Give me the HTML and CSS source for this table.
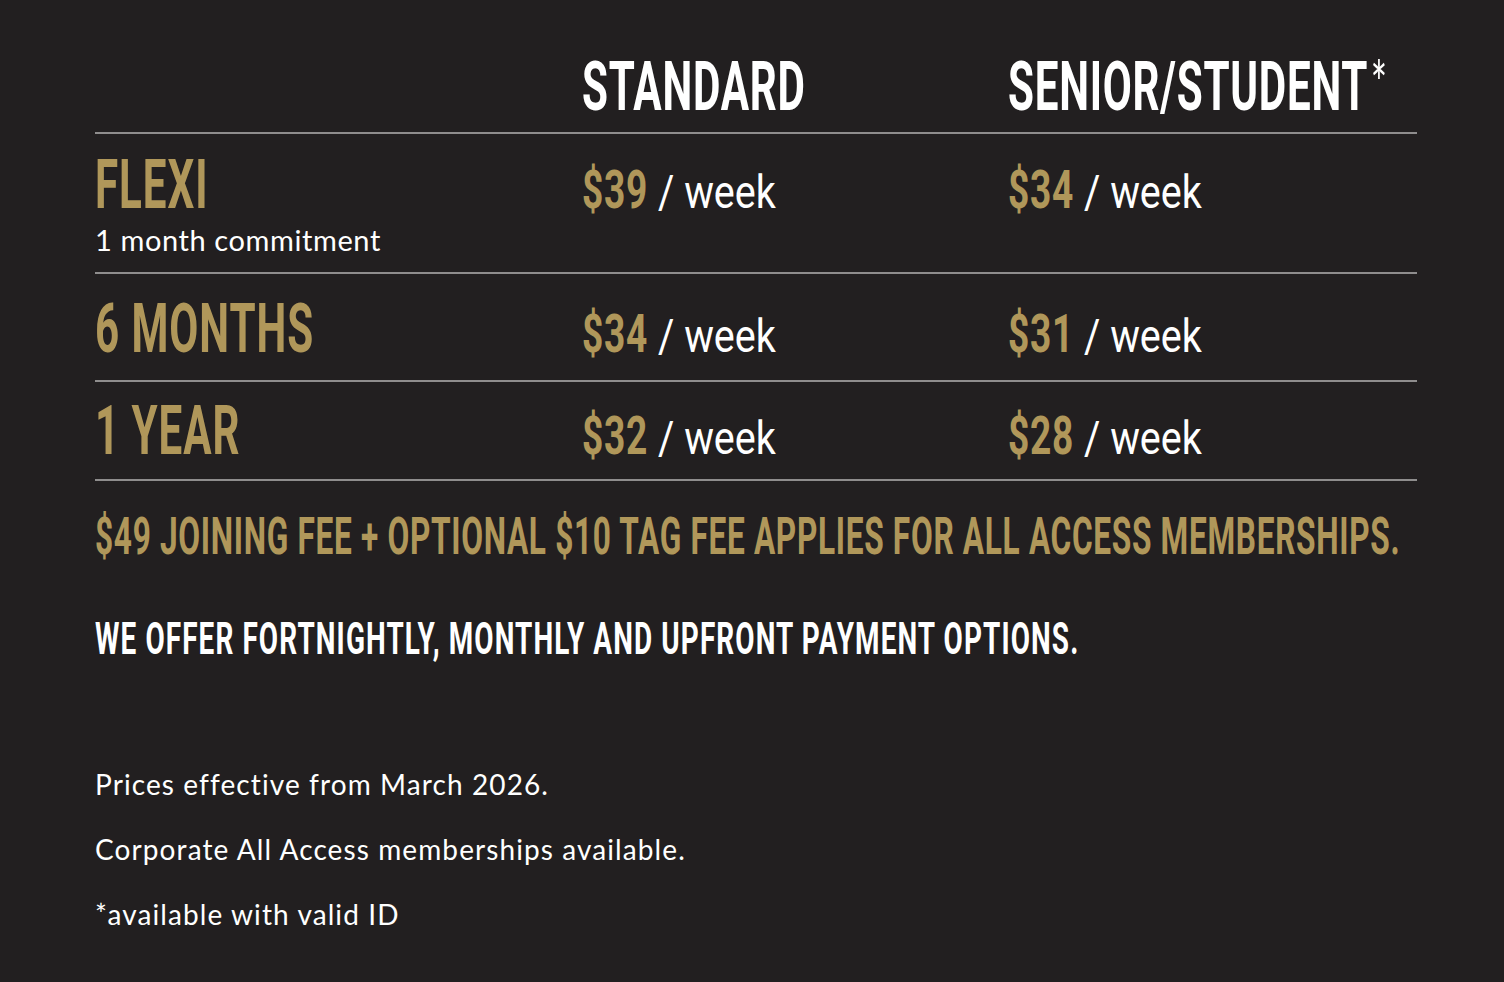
FILE: index.html
```html
<!DOCTYPE html>
<html lang="en">
<head>
<meta charset="utf-8">
<title>All Access Memberships</title>
<link rel="stylesheet" href="styles.css">
</head>
<body>
<main class="page">
  <section class="table">
    <div class="row head">
      <div></div>
      <div><span class="sx h">STANDARD</span></div>
      <div><span class="sx h">SENIOR/STUDENT<span class="ast">*</span></span></div>
    </div>
    <div class="row r1">
      <div class="plan">
        <span class="sx name">FLEXI</span>
        <div class="sub">1 month commitment</div>
      </div>
      <div class="price"><span class="amt"><span class="sx b">$39</span></span><span class="sx per">/ week</span></div>
      <div class="price"><span class="amt"><span class="sx b">$34</span></span><span class="sx per">/ week</span></div>
    </div>
    <div class="row r2">
      <div class="plan"><span class="sx name">6 MONTHS</span></div>
      <div class="price"><span class="amt"><span class="sx b">$34</span></span><span class="sx per">/ week</span></div>
      <div class="price"><span class="amt"><span class="sx b">$31</span></span><span class="sx per">/ week</span></div>
    </div>
    <div class="row r3">
      <div class="plan"><span class="sx name">1 YEAR</span></div>
      <div class="price"><span class="amt"><span class="sx b">$32</span></span><span class="sx per">/ week</span></div>
      <div class="price"><span class="amt"><span class="sx b">$28</span></span><span class="sx per">/ week</span></div>
    </div>
  </section>
  <p class="fee"><span class="sx">$49 JOINING FEE + OPTIONAL $10 TAG FEE APPLIES FOR ALL ACCESS MEMBERSHIPS.</span></p>
  <p class="offer"><span class="sx">WE OFFER FORTNIGHTLY, MONTHLY AND UPFRONT PAYMENT OPTIONS.</span></p>
  <div class="notes">
    <p>Prices effective from March 2026.</p>
    <p>Corporate All Access memberships available.</p>
    <p>*available with valid ID</p>
  </div>
</main>
</body>
</html>
```

FILE: styles.css
```css
html, body {
  margin: 0;
  padding: 0;
  background: #221f20;
  overflow: hidden;
}
body {
  font-family: Lato, "Open Sans", sans-serif;
  color: #ffffff;
}
.page {
  width: 1322px;
  height: 982px;
  padding-left: 95px;
  box-sizing: content-box;
  overflow: hidden;
}
.sx {
  display: inline-block;
  white-space: nowrap;
  transform-origin: 0 0;
  transform: scaleX(0.62);
  font-family: Roboto, "Liberation Sans", sans-serif;
  font-weight: 700;
  line-height: 1;
}
.row {
  display: grid;
  grid-template-columns: 487px 426px minmax(0, 1fr);
  align-items: baseline;
  border-bottom: 2px solid #8f8d8d;
}
.head {
  padding-top: 53px;
  padding-bottom: 11px;
}
.h {
  font-size: 68px;
  letter-spacing: 1.2px;
  color: #ffffff;
}
.ast {
  font-family: Lato, sans-serif;
  font-weight: 400;
  font-size: 62px;
  line-height: 1;
  vertical-align: top;
  position: relative;
  top: -2px;
  margin-left: 4px;
}
.r1 {
  padding-top: 17px;
  padding-bottom: 18px;
}
.r2 {
  padding-top: 21px;
  padding-bottom: 17px;
}
.r3 {
  padding-top: 15px;
  padding-bottom: 14px;
}
.name {
  font-size: 68px;
  letter-spacing: 1.5px;
  color: #b0975a;
}
.sub {
  font-size: 29px;
  line-height: 1;
  letter-spacing: 0.6px;
  margin-top: 6px;
  color: #ffffff;
}
.price {
  display: flex;
  align-items: baseline;
}
.amt {
  display: inline-block;
  width: 76px;
}
.b {
  font-size: 53px;
  letter-spacing: 1px;
  transform: scaleX(0.7);
  color: #b0975a;
}
.per {
  font-weight: 400;
  font-size: 46px;
  transform: scaleX(0.86);
  color: #ffffff;
}
.fee {
  margin: 28px 0 0;
  font-size: 51px;
  line-height: 1;
  letter-spacing: 1.1px;
  color: #b0975a;
}
.offer {
  margin: 53px 0 0;
  font-size: 45px;
  line-height: 1;
  letter-spacing: 1.8px;
  color: #ffffff;
}
.notes {
  margin-top: 109px;
}
.notes p {
  margin: 0 0 37px;
  font-size: 28px;
  line-height: 28px;
  letter-spacing: 1.1px;
}
```
